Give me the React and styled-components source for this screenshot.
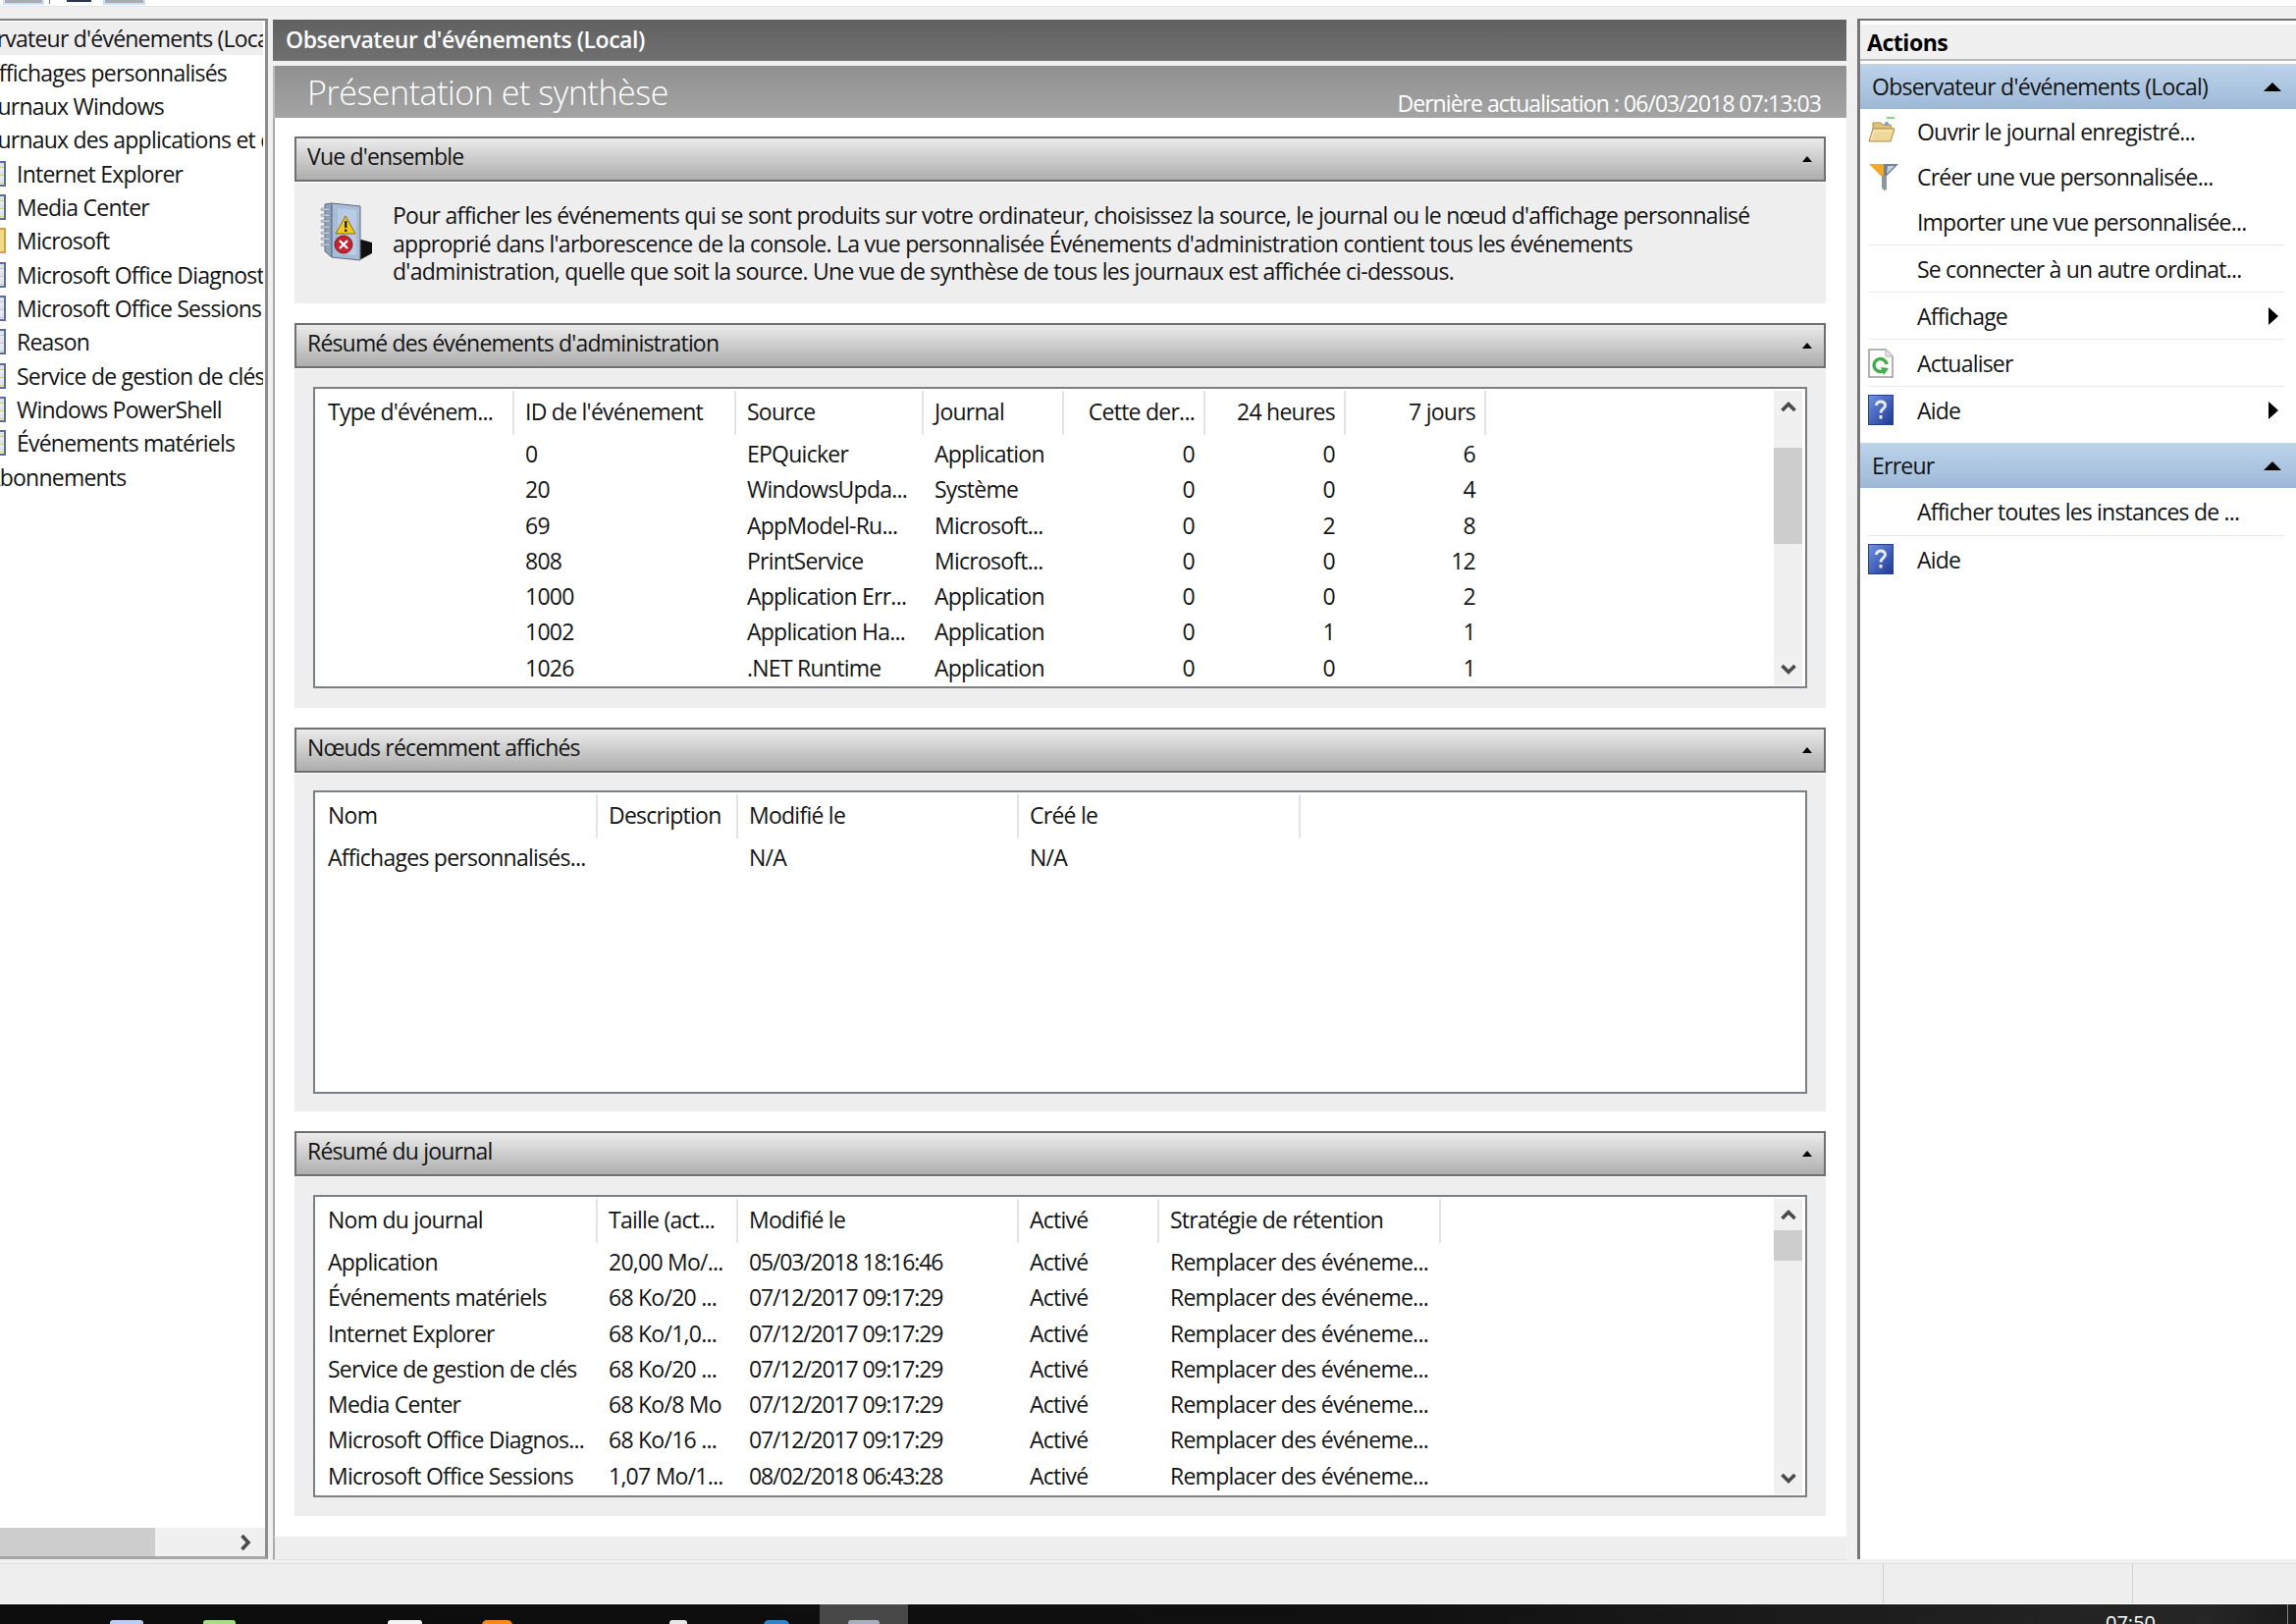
import React from 'react'
import styled, { createGlobalStyle } from 'styled-components'

const GlobalStyle = createGlobalStyle`
  html, body {
    margin: 0;
    padding: 0;
    background: #fff;
    overflow: hidden;
  }
  #root {
    width: 2339px;
    height: 1654px;
  }
`

const FONT = `"Open Sans", "Noto Sans", "Liberation Sans", sans-serif`

const Page = styled.div`
  width: 2339px;
  height: 1654px;
  display: flex;
  flex-direction: column;
  overflow: hidden;
  background: #f0f0f0;
  font-family: ${FONT};
  font-size: 23px;
  letter-spacing: -0.75px;
  color: #141414;
`

/* toolbar, only its bottom edge is visible */
const Toolbar = styled.div`
  height: 6px;
  flex: none;
  display: flex;
  align-items: flex-start;
  background: #fff;
  border-bottom: 1px solid #e2e2e2;
`

const ToolButton = styled.div`
  width: ${p => p.$w}px;
  height: ${p => p.$dark ? 2 : 5}px;
  margin-left: ${p => p.$ml}px;
  box-sizing: border-box;
  background: ${p => p.$dark ? '#2c3550' : '#a9adb3'};
  border: ${p => p.$dark ? 'none' : '2px solid #c8e2f7'};
  border-top: none;
`

const ToolDivider = styled.div`
  width: 1px;
  height: 4px;
  margin-left: 5px;
  background: #777;
`

const Main = styled.div`
  flex: none;
  height: 1569px;
  margin-top: 12px;
  display: flex;
`

const TreePanel = styled.div`
  width: 270px;
  flex: none;
  display: flex;
  flex-direction: column;
  background: #fff;
  border-top: 2px solid #808080;
  border-right: 3px solid #8c8c8c;
  border-bottom: 3px solid #a6a6a6;
  height: 1564px;
  overflow: hidden;
  letter-spacing: -0.78px;
`

const TreeList = styled.div`
  flex: 1;
  padding-top: 1px;
  overflow: hidden;
`

const TreeRow = styled.div`
  height: 34.35px;
  width: 268px;
  line-height: 34px;
  display: flex;
  align-items: center;
  white-space: nowrap;
  overflow: hidden;
  background: ${p => p.$selected ? '#eeeeee' : 'transparent'};
`

const TreeLabel = styled.span`
  margin-left: ${p => p.$offset}px;
`

const TreeIcon = styled.span`
  flex: none;
  width: 6px;
  height: 26px;
  margin-right: 11px;
  box-sizing: border-box;
  background: ${p => p.$folder ? '#f3d98a' : 'repeating-linear-gradient(#dfe5ee 0 4px, #d8c98f 4px 5px, #e9ecf2 5px 8px)'};
  border: 2px solid ${p => p.$folder ? '#c9a24f' : '#5a6e93'};
  border-left: none;
`

const HScroll = styled.div`
  flex: none;
  height: 29px;
  display: flex;
  align-items: center;
  background: #f0f0f0;
`

const HThumb = styled.div`
  width: 158px;
  height: 29px;
  background: #cdcdcd;
`

const HArrow = styled.div`
  margin-left: 86px;
  display: flex;
`

const CenterPanel = styled.div`
  width: 1603px;
  flex: none;
  margin-left: 5px;
  display: flex;
  flex-direction: column;
`

const PanelTitle = styled.div`
  height: 42px;
  flex: none;
  margin-top: 1px;
  padding-left: 13px;
  padding-bottom: 2px;
  box-sizing: border-box;
  display: flex;
  align-items: center;
  background: linear-gradient(#616161, #707070);
  color: #fff;
  font-weight: 600;
  letter-spacing: -0.45px;
`

const Banner = styled.div`
  height: 53px;
  flex: none;
  margin-top: 5px;
  padding: 0 26px 0 33px;
  box-sizing: border-box;
  display: flex;
  align-items: flex-end;
  justify-content: space-between;
  background: linear-gradient(#909090, #a4a4a4);
  border-left: 2px solid #b9b9b9;
  color: #fff;
`

const BannerTitle = styled.div`
  font-size: 34px;
  font-weight: 300;
  line-height: 46px;
  padding-bottom: 3px;
  letter-spacing: -0.45px;
`

const BannerDate = styled.div`
  line-height: 30px;
  letter-spacing: -0.95px;
`

const Content = styled.div`
  flex: 1;
  background: #fff;
  border-left: 2px solid #a9a9a9;
  padding: 19px 21px 21px 20px;
  display: flex;
  flex-direction: column;
`

const Section = styled.section`
  margin-bottom: 20px;
  &:last-child { margin-bottom: 0; }
`

const SectionBar = styled.div`
  height: 46px;
  box-sizing: border-box;
  padding: 0 12px 0 11px;
  display: flex;
  align-items: center;
  justify-content: space-between;
  background: linear-gradient(#ececec, #adadad);
  border: 2px solid #6f6f6f;
`

const SectionTitle = styled.span`
  margin-bottom: 6px;
  letter-spacing: -0.82px;
`

const SectionBody = styled.div`
  margin-top: 1px;
  background: #eeeeee;
  height: ${p => p.$h}px;
  box-sizing: border-box;
  padding: ${p => p.$pad};
  display: ${p => p.$row ? 'flex' : 'block'};
`

const Triangle = styled.span`
  width: 0;
  height: 0;
  display: block;
  border-left: ${p => p.$size}px solid transparent;
  border-right: ${p => p.$size}px solid transparent;
  border-bottom: ${p => p.$tall}px solid #000;
`

const IntroIcon = styled.div`
  flex: none;
  width: 54px;
  height: 60px;
  margin-right: 20px;
  margin-top: 20px;
`

const IntroText = styled.p`
  margin: 19px 0 0;
  line-height: 28.6px;
  letter-spacing: -0.72px;
  white-space: nowrap;
`

const ListBox = styled.div`
  height: ${p => p.$h}px;
  box-sizing: border-box;
  display: flex;
  background: #fff;
  border: 2px solid #7b7f86;
  padding: 2px 3px 1px 0;
  overflow: hidden;
`

const ListInner = styled.div`
  flex: 1;
  min-width: 0;
  overflow: hidden;
`

const GridRow = styled.div`
  display: grid;
  grid-template-columns: ${p => p.$cols};
  white-space: nowrap;
`

const HeadRow = styled(GridRow)`
  height: 45px;
  margin-bottom: 1px;
`

const DataRow = styled(GridRow)`
  height: 36.3px;
  line-height: 36px;
`

const HeadCell = styled.div`
  line-height: 43px;
  padding: 0 ${p => p.$right ? 9 : 10}px 0 11px;
  border-right: 2px solid #e4e4e4;
  text-align: ${p => p.$right ? 'right' : 'left'};
  overflow: hidden;
  &:first-child { padding-left: 13px; }
`

const Cell = styled.div`
  padding: 0 ${p => p.$right ? 9 : 10}px 0 11px;
  border-right: 2px solid transparent;
  text-align: ${p => p.$right ? 'right' : 'left'};
  letter-spacing: ${p => p.$tight ? '-1.15px' : 'inherit'};
  overflow: hidden;
  &:first-child { padding-left: 13px; }
`

const VScroll = styled.div`
  width: 29px;
  flex: none;
  display: flex;
  flex-direction: column;
  background: #f0f0f0;
`

const ScrollBtn = styled.div`
  height: 32px;
  flex: none;
  display: flex;
  align-items: center;
  justify-content: center;
`

const VThumb = styled.div`
  height: ${p => p.$size}px;
  margin-top: ${p => p.$top}px;
  flex: none;
  background: #cdcdcd;
`

const VSpacer = styled.div`
  flex: 1;
`

const FooterStrip = styled.div`
  height: 24px;
  flex: none;
  background: #eeeeee;
  border-left: 2px solid #a9a9a9;
  border-bottom: 1px solid #e0e0e0;
  border-top: 1px solid #ececec;
  box-sizing: border-box;
`

const ActionsPanel = styled.div`
  width: 444px;
  flex: none;
  margin-left: 11px;
  height: 1567px;
  background: #fff;
  border-top: 2px solid #6f6f6f;
  border-left: 3px solid #777;
`

const ActionsHead = styled.div`
  height: 35px;
  margin-top: 4px;
  padding-left: 7px;
  display: flex;
  align-items: center;
  background: #f0f0f0;
  border-bottom: 2px solid #b9b9b9;
  font-weight: 700;
  color: #000;
  letter-spacing: -0.45px;
`

const ActionGroup = styled.div`
  height: 46px;
  margin-top: ${p => p.$mt}px;
  padding: 0 15px 0 12px;
  display: flex;
  align-items: center;
  justify-content: space-between;
  background: linear-gradient(#bdd3ea, #9db8d7);
`

const ActionRow = styled.div`
  height: ${p => p.$h}px;
  margin: 0 12px 0 8px;
  box-sizing: border-box;
  display: flex;
  align-items: center;
  letter-spacing: -0.8px;
  border-bottom: ${p => p.$line ? '1px solid #e9e9e9' : 'none'};
`

const ActionIcon = styled.span`
  width: 50px;
  flex: none;
  display: flex;
  align-items: center;
`

const MoreArrow = styled.span`
  margin-left: auto;
  margin-right: 6px;
  width: 0;
  height: 0;
  border-top: 9px solid transparent;
  border-bottom: 9px solid transparent;
  border-left: 10px solid #000;
`

const StatusBar = styled.div`
  height: 41px;
  flex: none;
  margin-top: 4px;
  display: grid;
  grid-template-columns: 1919px 254px 1fr;
  background: #eeeeee;
  border-top: 1px solid #dfdfdf;
  box-sizing: border-box;
`

const StatusCell = styled.div`
  border-right: 1px solid #d0d0d0;
`

const Taskbar = styled.div`
  flex: 1;
  display: flex;
  align-items: flex-start;
  overflow: hidden;
  background: linear-gradient(90deg, #0c0c0c 0%, #101010 60%, #262626 96%, #1a1a1a 100%);
  border-top: 1px solid #fff;
`

const TaskSlot = styled.div`
  width: ${p => p.$w}px;
  height: ${p => p.$h || 5}px;
  margin-top: ${p => p.$mt ?? 16}px;
  margin-left: ${p => p.$ml}px;
  flex: none;
  background: ${p => p.$c};
  border-radius: ${p => p.$r || '3px 3px 0 0'};
`

const ActiveSlot = styled.div`
  width: 90px;
  height: 21px;
  margin-left: 31px;
  flex: none;
  display: flex;
  justify-content: center;
  align-items: flex-start;
  background: #484848;
`

const Clock = styled.div`
  margin-left: 1220px;
  margin-top: 7px;
  color: #fff;
  font-size: 20px;
  line-height: 24px;
  letter-spacing: 0;
`

const TaskEdge = styled.div`
  width: 1px;
  height: 21px;
  margin-left: 134px;
  background: #8a8a8a;
`

const Chevron = ({ dir }) => {
  const pts = {
    up: 'M1.5 10 L8 3.5 L14.5 10',
    down: 'M1.5 2 L8 8.5 L14.5 2',
  }
  return (
    <svg width="16" height="12" viewBox="0 0 16 12">
      <path d={pts[dir]} fill="none" stroke="#4a4a4a" strokeWidth="3.6" />
    </svg>
  )
}

const ChevronRight = () => (
  <svg width="12" height="18" viewBox="0 0 12 18">
    <path d="M2.5 2 L9 9 L2.5 16" fill="none" stroke="#4a4a4a" strokeWidth="3.6" />
  </svg>
)

const FolderIcon = () => (
  <svg width="30" height="30" viewBox="0 0 30 30" style={{ marginTop: -2 }}>
    <rect x="19" y="1" width="8" height="2" fill="#7fd67f" />
    <path d="M5 11 L5 7 L13 7 L15 9 L23 9 L24 12 L24 20 L5 20 Z" fill="#e0c27c" stroke="#a98a45" />
    <circle cx="19" cy="8" r="2" fill="#6f9fc8" />
    <path d="M1 26 L5 13 L27 13 L23 26 Z" fill="#f0d998" stroke="#a98a45" />
    <path d="M3 24 L6 15 L25 15" fill="none" stroke="#fbeec8" />
  </svg>
)

const FunnelIcon = () => (
  <svg width="32" height="30" viewBox="0 0 32 30">
    <path d="M1 2 L16 2 L16 19 L13 14 Z" fill="#f7a823" />
    <path d="M16 2 L31 2 L19 14 L19 19 L16 19 Z" fill="#6d8298" />
    <path d="M14 14 L19 14 L19 28 L16 29 L14 26 Z" fill="#8c97a3" />
    <path d="M20 4 L27 4 L19 12 Z" fill="#c6d2dd" />
  </svg>
)

const RefreshIcon = () => (
  <svg width="26" height="30" viewBox="0 0 26 30">
    <path d="M1 1 L18 1 L25 8 L25 29 L1 29 Z" fill="#fdfdfd" stroke="#9a9a9a" strokeWidth="1.5" />
    <path d="M18 1 L18 8 L25 8" fill="#e6e6e6" stroke="#b5b5b5" />
    <path d="M19 16 A6.5 6.5 0 1 0 15 23" fill="none" stroke="#3fae49" strokeWidth="3.5" />
    <path d="M13 19 L21 20 L16 27 Z" fill="#3fae49" />
  </svg>
)

const HelpIcon = ({ id }) => (
  <svg width="26" height="31" viewBox="0 0 26 31">
    <defs>
      <linearGradient id={id} x1="0" y1="0" x2="1" y2="1">
        <stop offset="0" stopColor="#6f95e4" />
        <stop offset="1" stopColor="#1f3593" />
      </linearGradient>
    </defs>
    <rect x="0.5" y="0.5" width="25" height="30" fill={`url(#${id})`} stroke="#27408f" />
    <path d="M8.5 11 C8.5 5.5 17.5 5.5 17.5 11 C17.5 14.5 13 14.5 13 18.5" fill="none" stroke="#e6ecfa" strokeWidth="3" />
    <rect x="11.5" y="21" width="3" height="3.5" fill="#e6ecfa" />
  </svg>
)

const LogBookIcon = () => (
  <svg width="54" height="60" viewBox="0 0 54 60">
    <path d="M42 38 L53 41 L53 52 L42 58 L36 58 L36 42 Z" fill="#111" />
    <path d="M5 2 L12 1 L12 56 L5 50 Z" fill="#8fa3bd" stroke="#5b6b82" />
    <path d="M12 1 L41 4 L41 59 L12 56 Z" fill="#a9bcd6" stroke="#5b6b82" />
    <path d="M18 6 L37 8 L37 54 L18 52 Z" fill="#b9cbe3" />
    {[6, 12, 18, 24, 30, 36, 42].map(y => (
      <rect key={y} x="1" y={y} width="9" height="2.5" rx="1" fill="#bfc8d4" stroke="#6d7a8c" strokeWidth="0.5" />
    ))}
    <path d="M26 14 L36 32 L16 32 Z" fill="#f2c91d" stroke="#8a6d10" />
    <rect x="25" y="19" width="2.4" height="7" fill="#222" />
    <rect x="25" y="27.5" width="2.4" height="2.5" fill="#222" />
    <circle cx="24" cy="43" r="9" fill="#c4232f" stroke="#7d1a20" />
    <path d="M20 39 L28 47 M28 39 L20 47" stroke="#fff" strokeWidth="2.4" />
  </svg>
)

const treeRows = [
  { label: "Observateur d'événements (Local)", offset: -56, selected: true },
  { label: 'Affichages personnalisés', offset: -15 },
  { label: 'Journaux Windows', offset: -21 },
  { label: 'Journaux des applications et de services', offset: -21 },
  { label: 'Internet Explorer', icon: true },
  { label: 'Media Center', icon: true },
  { label: 'Microsoft', icon: true, folder: true },
  { label: 'Microsoft Office Diagnostics', icon: true },
  { label: 'Microsoft Office Sessions', icon: true },
  { label: 'Reason', icon: true },
  { label: 'Service de gestion de clés', icon: true },
  { label: 'Windows PowerShell', icon: true },
  { label: 'Événements matériels', icon: true },
  { label: 'Abonnements', offset: -14 },
]

const adminCols = '203px 226px 191px 143px 144px 143px 143px 1fr'
const adminHead = ["Type d'événem...", "ID de l'événement", 'Source', 'Journal', 'Cette der...', '24 heures', '7 jours']
const adminRows = [
  ['', '0', 'EPQuicker', 'Application', '0', '0', '6'],
  ['', '20', 'WindowsUpda...', 'Système', '0', '0', '4'],
  ['', '69', 'AppModel-Ru...', 'Microsoft...', '0', '2', '8'],
  ['', '808', 'PrintService', 'Microsoft...', '0', '0', '12'],
  ['', '1000', 'Application Err...', 'Application', '0', '0', '2'],
  ['', '1002', 'Application Ha...', 'Application', '0', '1', '1'],
  ['', '1026', '.NET Runtime', 'Application', '0', '0', '1'],
]

const recentCols = '288px 143px 286px 287px 1fr'
const recentHead = ['Nom', 'Description', 'Modifié le', 'Créé le']
const recentRows = [['Affichages personnalisés...', '', 'N/A', 'N/A']]

const logCols = '288px 143px 286px 143px 287px 1fr'
const logHead = ['Nom du journal', 'Taille (act...', 'Modifié le', 'Activé', 'Stratégie de rétention']
const retention = 'Remplacer des événeme...'
const logRows = [
  ['Application', '20,00 Mo/...', '05/03/2018 18:16:46', 'Activé', retention],
  ['Événements matériels', '68 Ko/20 ...', '07/12/2017 09:17:29', 'Activé', retention],
  ['Internet Explorer', '68 Ko/1,0...', '07/12/2017 09:17:29', 'Activé', retention],
  ['Service de gestion de clés', '68 Ko/20 ...', '07/12/2017 09:17:29', 'Activé', retention],
  ['Media Center', '68 Ko/8 Mo', '07/12/2017 09:17:29', 'Activé', retention],
  ['Microsoft Office Diagnos...', '68 Ko/16 ...', '07/12/2017 09:17:29', 'Activé', retention],
  ['Microsoft Office Sessions', '1,07 Mo/1...', '08/02/2018 06:43:28', 'Activé', retention],
]

// one of the three list views in the middle column
const ListView = ({ height, cols, head, rows, rightFrom = 99, tightCol = -1, thumb }) => (
  <ListBox $h={height}>
    <ListInner>
      <HeadRow $cols={cols}>
        {head.map((h, i) => <HeadCell key={i} $right={i >= rightFrom}>{h}</HeadCell>)}
      </HeadRow>
      {rows.map((row, r) => (
        <DataRow key={r} $cols={cols}>
          {row.map((c, i) => <Cell key={i} $right={i >= rightFrom} $tight={i === tightCol}>{c}</Cell>)}
        </DataRow>
      ))}
    </ListInner>
    {thumb && (
      <VScroll>
        <ScrollBtn><Chevron dir="up" /></ScrollBtn>
        <VThumb $top={thumb.top} $size={thumb.size} />
        <VSpacer />
        <ScrollBtn><Chevron dir="down" /></ScrollBtn>
      </VScroll>
    )}
  </ListBox>
)

const App = () => {
  return (
    <Page>
      <GlobalStyle />
      <Toolbar>
        <ToolButton $w={42} $ml={3} />
        <ToolDivider />
        <ToolButton $w={25} $ml={17} $dark />
        <ToolButton $w={43} $ml={12} />
      </Toolbar>

      <Main>
        <TreePanel>
          <TreeList>
            {treeRows.map(row => (
              <TreeRow key={row.label} $selected={row.selected}>
                {row.icon && <TreeIcon $folder={row.folder} />}
                <TreeLabel $offset={row.offset || 0}>{row.label}</TreeLabel>
              </TreeRow>
            ))}
          </TreeList>
          <HScroll>
            <HThumb />
            <HArrow><ChevronRight /></HArrow>
          </HScroll>
        </TreePanel>

        <CenterPanel>
          <PanelTitle>Observateur d'événements (Local)</PanelTitle>
          <Banner>
            <BannerTitle>Présentation et synthèse</BannerTitle>
            <BannerDate>Dernière actualisation : 06/03/2018 07:13:03</BannerDate>
          </Banner>
          <Content>
            <Section>
              <SectionBar><SectionTitle>Vue d'ensemble</SectionTitle><Triangle $size={5} $tall={6} /></SectionBar>
              <SectionBody $h={123} $pad="0 0 0 26px" $row>
                <IntroIcon><LogBookIcon /></IntroIcon>
                <IntroText>
                  Pour afficher les événements qui se sont produits sur votre ordinateur, choisissez la source, le journal ou le nœud d'affichage personnalisé<br />
                  approprié dans l'arborescence de la console. La vue personnalisée Événements d'administration contient tous les événements<br />
                  d'administration, quelle que soit la source. Une vue de synthèse de tous les journaux est affichée ci-dessous.
                </IntroText>
              </SectionBody>
            </Section>

            <Section>
              <SectionBar><SectionTitle>Résumé des événements d'administration</SectionTitle><Triangle $size={5} $tall={6} /></SectionBar>
              <SectionBody $h={345} $pad="18px 19px">
                <ListView height={307} cols={adminCols} head={adminHead} rows={adminRows} rightFrom={4} thumb={{ top: 26, size: 98 }} />
              </SectionBody>
            </Section>

            <Section>
              <SectionBar><SectionTitle>Nœuds récemment affichés</SectionTitle><Triangle $size={5} $tall={6} /></SectionBar>
              <SectionBody $h={344} $pad="17px 19px">
                <ListView height={309} cols={recentCols} head={recentHead} rows={recentRows} />
              </SectionBody>
            </Section>

            <Section>
              <SectionBar><SectionTitle>Résumé du journal</SectionTitle><Triangle $size={5} $tall={6} /></SectionBar>
              <SectionBody $h={345} $pad="18px 19px">
                <ListView height={308} cols={logCols} head={logHead} rows={logRows} tightCol={2} thumb={{ top: 0, size: 31 }} />
              </SectionBody>
            </Section>
          </Content>
          <FooterStrip />
        </CenterPanel>

        <ActionsPanel>
          <ActionsHead>Actions</ActionsHead>
          <ActionGroup $mt={3}>Observateur d'événements (Local)<Triangle $size={9} $tall={9} /></ActionGroup>
          <ActionRow $h={46}><ActionIcon><FolderIcon /></ActionIcon>Ouvrir le journal enregistré...</ActionRow>
          <ActionRow $h={46}><ActionIcon><FunnelIcon /></ActionIcon>Créer une vue personnalisée...</ActionRow>
          <ActionRow $h={47} $line><ActionIcon />Importer une vue personnalisée...</ActionRow>
          <ActionRow $h={48} $line><ActionIcon />Se connecter à un autre ordinat...</ActionRow>
          <ActionRow $h={48} $line><ActionIcon />Affichage<MoreArrow /></ActionRow>
          <ActionRow $h={48} $line><ActionIcon><RefreshIcon /></ActionIcon>Actualiser</ActionRow>
          <ActionRow $h={47}><ActionIcon><HelpIcon id="helpA" /></ActionIcon>Aide<MoreArrow /></ActionRow>
          <ActionGroup $mt={10}>Erreur<Triangle $size={9} $tall={9} /></ActionGroup>
          <ActionRow $h={49} $line><ActionIcon />Afficher toutes les instances de ...</ActionRow>
          <ActionRow $h={47}><ActionIcon><HelpIcon id="helpB" /></ActionIcon>Aide</ActionRow>
        </ActionsPanel>
      </Main>

      <StatusBar>
        <StatusCell />
        <StatusCell />
        <div />
      </StatusBar>

      <Taskbar>
        <TaskSlot $ml={112} $w={34} $c="#b9cdf0" />
        <TaskSlot $ml={61} $w={33} $c="#a6dc8c" />
        <TaskSlot $ml={155} $w={35} $c="#f4f4f4" />
        <TaskSlot $ml={61} $w={31} $c="#f28a1c" $r="16px 16px 0 0" />
        <TaskSlot $ml={160} $w={18} $c="#e8e8e8" />
        <TaskSlot $ml={78} $w={26} $c="#2f83c9" $r="12px 12px 0 0" />
        <ActiveSlot><TaskSlot $ml={0} $w={32} $h={4} $c="#a7afbc" /></ActiveSlot>
        <Clock>07:50</Clock>
        <TaskEdge />
      </Taskbar>
    </Page>
  )
}

export default App
